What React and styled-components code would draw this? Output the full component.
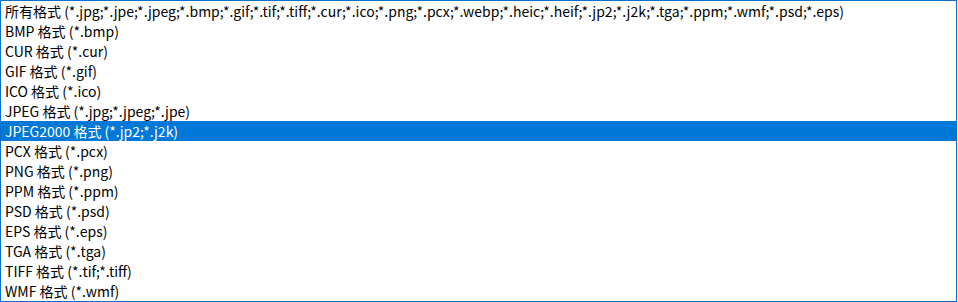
import React from 'react';
import styled, { createGlobalStyle } from 'styled-components';

const GlobalStyle = createGlobalStyle`
  html, body {
    margin: 0;
    padding: 0;
    background: #ffffff;
  }
`;

const formats = [
  '所有格式 (*.jpg;*.jpe;*.jpeg;*.bmp;*.gif;*.tif;*.tiff;*.cur;*.ico;*.png;*.pcx;*.webp;*.heic;*.heif;*.jp2;*.j2k;*.tga;*.ppm;*.wmf;*.psd;*.eps)',
  'BMP 格式 (*.bmp)',
  'CUR 格式 (*.cur)',
  'GIF 格式 (*.gif)',
  'ICO 格式 (*.ico)',
  'JPEG 格式 (*.jpg;*.jpeg;*.jpe)',
  'JPEG2000 格式 (*.jp2;*.j2k)',
  'PCX 格式 (*.pcx)',
  'PNG 格式 (*.png)',
  'PPM 格式 (*.ppm)',
  'PSD 格式 (*.psd)',
  'EPS 格式 (*.eps)',
  'TGA 格式 (*.tga)',
  'TIFF 格式 (*.tif;*.tiff)',
  'WMF 格式 (*.wmf)',
];

function App() {
  const selected = 6;

  return (
    <>
      <GlobalStyle />
      <ListBox>
        {formats.map((label, i) => (
          <Option key={label} $selected={i === selected}>
            {label}
          </Option>
        ))}
      </ListBox>
    </>
  );
}

export default App;

const ListBox = styled.ul`
  list-style: none;
  margin: 0;
  padding: 0;
  width: 957px;
  box-sizing: border-box;
  border: 1px solid #0a6fc7;
  background: #ffffff;
`;

const Option = styled.li`
  height: 20px;
  line-height: 20px;
  padding-left: 4px;
  font-family: "Noto Sans CJK SC", sans-serif;
  font-size: 14px;
  white-space: nowrap;
  overflow: hidden;
  color: ${p => (p.$selected ? '#ffffff' : '#000000')};
  background: ${p => (p.$selected ? '#0078d7' : 'transparent')};
`;
